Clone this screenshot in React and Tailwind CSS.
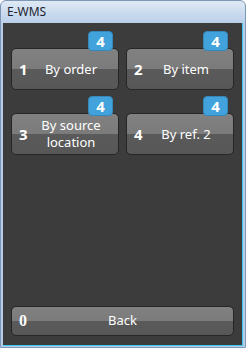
import React from "react";

const options = [
  { num: "1", label: "By order", count: 4 },
  { num: "2", label: "By item", count: 4 },
  { num: "3", label: "By source location", count: 4 },
  { num: "4", label: "By ref. 2", count: 4 },
];

function Badge({ value }) {
  return (
    <div className="absolute top-0 right-[6px] w-[25px] h-[20px] rounded-[4px] bg-[#41a2dc] border border-[#3688ba] flex items-center justify-center text-white font-bold text-[15px] leading-none">
      {value}
    </div>
  );
}

function MenuButton({ num, label, count }) {
  return (
    <div className="relative pt-[17px]">
      <div className="h-[42px] rounded-[5px] border border-[#262626] overflow-hidden relative bg-[linear-gradient(#818181_0%,#7b7b7b_50%,#5a5a5a_50%,#575757_100%)]">
        <div className="absolute inset-0 flex items-center">
          <span className="pl-[7px] w-[16px] text-white font-bold text-[15px] leading-none">{num}</span>
          <span className="flex-1 pl-[8px] pr-[12px] text-center text-white text-[13px] leading-[17px]">{label}</span>
        </div>
      </div>
      {count != null && <Badge value={count} />}
    </div>
  );
}

export default function App() {
  return (
    <div className="w-[246px] h-[348px] bg-white" style={{ fontFamily: '"Noto Sans", "Open Sans", sans-serif' }}>
      <div className="w-full h-full flex flex-col rounded-t-[6px] border border-[#7f97b5] bg-[linear-gradient(#dfe9f5,#b6cde8_24px,#b6cde8)] px-[2px] pb-[1px]">
        <div className="h-[22px] flex items-center pl-[4px] text-[12px] text-[#1e1e2e]">E-WMS</div>
        <div className="flex-1 flex flex-col bg-[#3c3c3c] border-r border-b border-[#3cc6f0] px-[8px] pt-[8px] pb-[9px]">
          <div className="grid grid-cols-2 gap-x-[7px] gap-y-[6px]">
            {options.map((o) => (
              <MenuButton key={o.num} {...o} />
            ))}
          </div>
          <div className="mt-auto h-[30px] rounded-[5px] border border-[#262626] overflow-hidden relative bg-[linear-gradient(#818181_0%,#7b7b7b_50%,#5a5a5a_50%,#575757_100%)]">
            <div className="absolute inset-0 flex items-center">
              <span className="pl-[7px] w-[16px] text-white font-bold text-[16px] leading-none" style={{ fontFamily: '"Liberation Serif", serif' }}>0</span>
              <span className="flex-1 pr-[16px] text-center text-white text-[13px]">Back</span>
            </div>
          </div>
        </div>
      </div>
    </div>
  );
}
